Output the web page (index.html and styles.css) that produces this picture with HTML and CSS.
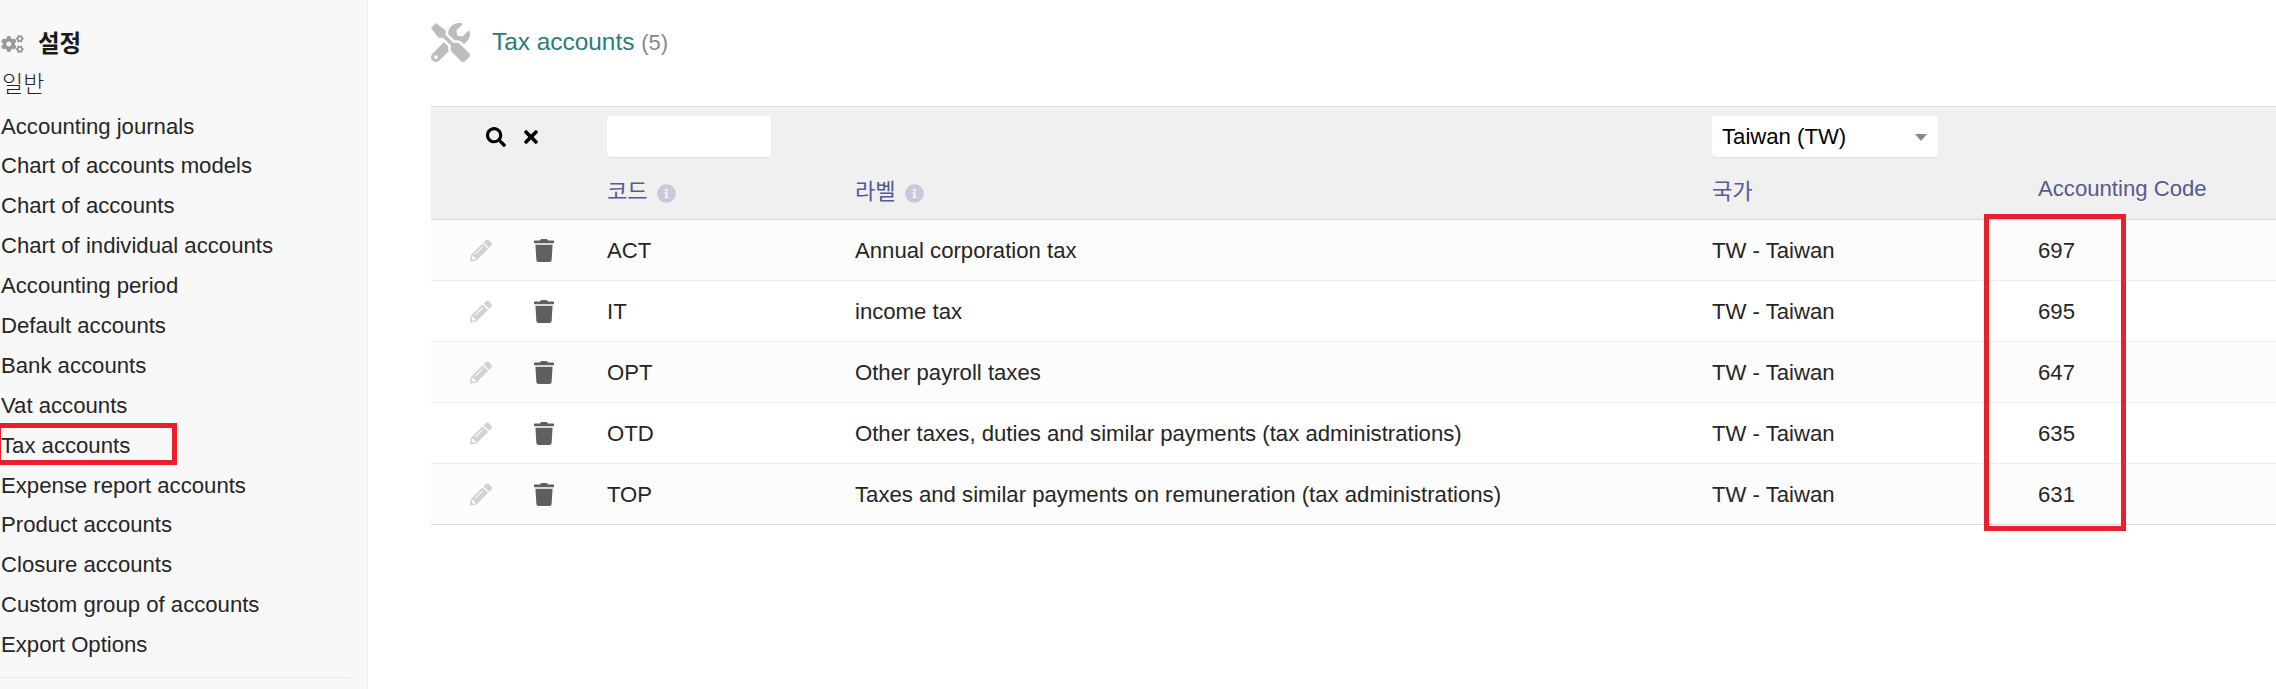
FILE: index.html
```html
<!DOCTYPE html>
<html lang="ko">
<head>
<meta charset="utf-8">
<title>Tax accounts</title>
<link rel="stylesheet" href="styles.css">
</head>
<body>
<div class="page">
  <aside class="sidebar">
    <div class="side-title">
      <svg class="cogs" viewBox="0 0 640 512"><path d="M512.1 191l-8.2 14.3c-3 5.3-9.4 7.5-15.1 5.4-11.8-4.4-22.6-10.7-32.1-18.6-4.6-3.8-5.8-10.5-2.8-15.7l8.2-14.3c-6.9-8-12.3-17.3-15.9-27.4h-16.5c-6 0-11.2-4.3-12.2-10.3-2-12-2.1-24.6 0-37.1 1-6 6.2-10.4 12.2-10.4h16.5c3.6-10.1 9-19.4 15.9-27.4l-8.2-14.3c-3-5.2-1.9-11.9 2.8-15.7 9.5-7.9 20.4-14.2 32.1-18.6 5.7-2.1 12.1.1 15.1 5.4l8.2 14.3c10.5-1.9 21.2-1.9 31.7 0L552 6.3c3-5.3 9.4-7.5 15.1-5.4 11.8 4.4 22.6 10.7 32.1 18.6 4.6 3.8 5.8 10.5 2.8 15.7l-8.2 14.3c6.9 8 12.3 17.3 15.9 27.4h16.5c6 0 11.2 4.3 12.2 10.3 2 12 2.1 24.6 0 37.1-1 6-6.2 10.4-12.2 10.4h-16.5c-3.6 10.1-9 19.4-15.9 27.4l8.2 14.3c3 5.2 1.9 11.9-2.8 15.7-9.5 7.9-20.4 14.2-32.1 18.6-5.7 2.1-12.1-.1-15.1-5.4l-8.2-14.3c-10.4 1.9-21.2 1.9-31.7 0zm-10.5-58.8c38.5 29.6 82.4-14.3 52.8-52.8-38.5-29.7-82.4 14.3-52.8 52.8zM386.3 286.1l33.7 16.8c10.1 5.8 14.5 18.1 10.5 29.1-8.9 24.2-26.4 46.4-42.6 65.8-7.4 8.9-20.2 11.1-30.3 5.3l-29.1-16.8c-16 13.7-34.6 24.6-54.9 31.7v33.6c0 11.6-8.3 21.6-19.7 23.6-24.6 4.2-50.4 4.4-75.9 0-11.5-2-20-11.9-20-23.6V418c-20.3-7.2-38.9-18-54.9-31.7L74 403c-10 5.8-22.9 3.6-30.3-5.3-16.2-19.4-33.3-41.6-42.2-65.7-4-10.9.4-23.2 10.5-29.1l33.3-16.8c-3.9-20.9-3.9-42.4 0-63.4L12 205.8c-10.1-5.8-14.6-18.1-10.5-29 8.9-24.2 26-46.4 42.2-65.8 7.4-8.9 20.2-11.1 30.3-5.3l29.1 16.8c16-13.7 34.6-24.6 54.9-31.7V57.1c0-11.5 8.2-21.5 19.6-23.5 24.6-4.2 50.5-4.4 76-.1 11.5 2 20 11.9 20 23.6v33.6c20.3 7.2 38.9 18 54.9 31.7l29.1-16.8c10-5.8 22.9-3.6 30.3 5.3 16.2 19.4 33.2 41.6 42.1 65.8 4 10.9.1 23.2-10 29.1l-33.7 16.8c3.9 21 3.9 42.5 0 63.5zm-117.6 21.1c59.2-77-28.7-164.9-105.7-105.7-59.2 77 28.7 164.9 105.7 105.7zm243.4 182.7l-8.2 14.3c-3 5.3-9.4 7.5-15.1 5.4-11.8-4.4-22.6-10.7-32.1-18.6-4.6-3.8-5.8-10.5-2.8-15.7l8.2-14.3c-6.9-8-12.3-17.3-15.9-27.4h-16.5c-6 0-11.2-4.3-12.2-10.3-2-12-2.1-24.6 0-37.1 1-6 6.2-10.4 12.2-10.4h16.5c3.6-10.1 9-19.4 15.9-27.4l-8.2-14.3c-3-5.2-1.9-11.9 2.8-15.7 9.5-7.9 20.4-14.2 32.1-18.6 5.7-2.1 12.1.1 15.1 5.4l8.2 14.3c10.5-1.9 21.2-1.9 31.7 0l8.2-14.3c3-5.3 9.4-7.5 15.1-5.4 11.8 4.4 22.6 10.7 32.1 18.6 4.6 3.8 5.8 10.5 2.8 15.7l-8.2 14.3c6.9 8 12.3 17.3 15.9 27.4h16.5c6 0 11.2 4.3 12.2 10.3 2 12 2.1 24.6 0 37.1-1 6-6.2 10.4-12.2 10.4h-16.5c-3.6 10.1-9 19.4-15.9 27.4l8.2 14.3c3 5.2 1.9 11.9-2.8 15.7-9.5 7.9-20.4 14.2-32.1 18.6-5.7 2.1-12.1-.1-15.1-5.4l-8.2-14.3c-10.4 1.9-21.2 1.9-31.7 0zM501.6 431c38.5 29.6 82.4-14.3 52.8-52.8-38.5-29.6-82.4 14.3-52.8 52.8z"/></svg>
      <span>설정</span>
    </div>
    <nav class="side-nav">
      <a class="side-link side-link-ko">일반</a>
      <a class="side-link">Accounting journals</a>
      <a class="side-link">Chart of accounts models</a>
      <a class="side-link">Chart of accounts</a>
      <a class="side-link">Chart of individual accounts</a>
      <a class="side-link">Accounting period</a>
      <a class="side-link">Default accounts</a>
      <a class="side-link">Bank accounts</a>
      <a class="side-link">Vat accounts</a>
      <a class="side-link">Tax accounts</a>
      <a class="side-link">Expense report accounts</a>
      <a class="side-link">Product accounts</a>
      <a class="side-link">Closure accounts</a>
      <a class="side-link">Custom group of accounts</a>
      <a class="side-link">Export Options</a>
    </nav>
    <hr class="side-rule">
  </aside>

  <main class="main">
    <header class="title-bar">
      <svg class="tools" viewBox="0 0 512 512"><path d="M501.1 395.7L384 278.6c-23.1-23.1-57.6-27.6-85.4-13.9L192 158.1V96L64 0 0 64l96 128h62.1l106.6 106.6c-13.6 27.8-9.2 62.3 13.9 85.4l117.1 117.1c14.6 14.6 38.2 14.6 52.7 0l52.7-52.7c14.5-14.6 14.5-38.2 0-52.7zM331.7 225c28.3 0 54.9 11 74.9 31l19.4 19.4c15.8-6.9 30.8-16.5 43.8-29.5 37.1-37.1 49.7-89.3 37.9-136.7-2.2-9-13.5-12.1-20.1-5.5l-74.4 74.4-67.9-11.3L334 98.9l74.4-74.4c6.6-6.6 3.4-17.9-5.7-20.2-47.4-11.7-99.6.9-136.6 37.9-28.5 28.5-41.9 66.1-41.2 103.6l82.1 82.1c8.1-1.9 16.5-2.9 24.7-2.9zm-103.9 82l-56.7-56.7L18.7 402.8c-25 25-25 65.5 0 90.5s65.5 25 90.5 0l123.6-123.6c-7.6-19.9-9.9-41.6-5-62.7zM64 472c-13.2 0-24-10.8-24-24 0-13.3 10.7-24 24-24s24 10.7 24 24c0 13.2-10.7 24-24 24z"/></svg>
      <h1 class="title">Tax accounts <span class="count">(5)</span></h1>
    </header>

    <table class="grid">
      <colgroup>
        <col class="col-actions"><col class="col-code"><col class="col-label"><col class="col-country"><col>
      </colgroup>
      <thead>
        <tr class="filter-row">
          <th>
            <div class="filter-actions">
              <svg class="ic-search" viewBox="0 0 512 512"><path d="M505 442.7L405.3 343c-4.5-4.5-10.6-7-17-7H372c27.6-35.3 44-79.7 44-128C416 93.1 322.9 0 208 0S0 93.1 0 208s93.1 208 208 208c48.3 0 92.7-16.4 128-44v16.3c0 6.4 2.5 12.5 7 17l99.7 99.7c9.4 9.4 24.6 9.4 33.9 0l28.3-28.3c9.4-9.4 9.4-24.6.1-34zM208 336c-70.7 0-128-57.2-128-128 0-70.7 57.2-128 128-128 70.7 0 128 57.2 128 128 0 70.7-57.2 128-128 128z"/></svg>
              <svg class="ic-times" viewBox="0 0 352 512"><path d="M242.72 256l100.07-100.07c12.28-12.28 12.28-32.19 0-44.48l-22.24-22.24c-12.28-12.28-32.19-12.28-44.48 0L176 189.28 75.93 89.21c-12.28-12.28-32.19-12.28-44.48 0L9.21 111.45c-12.28 12.28-12.28 32.19 0 44.48L109.28 256 9.21 356.07c-12.28 12.28-12.28 32.19 0 44.48l22.24 22.24c12.28 12.28 32.2 12.28 44.48 0L176 322.72l100.07 100.07c12.28 12.28 32.2 12.28 44.48 0l22.24-22.24c12.28-12.28 12.28-32.19 0-44.48L242.72 256z"/></svg>
            </div>
          </th>
          <th><div class="field field-input"></div></th>
          <th></th>
          <th><div class="field field-select"><span>Taiwan (TW)</span><i class="caret"></i></div></th>
          <th></th>
        </tr>
        <tr class="head-row">
          <th></th>
          <th>코드 <svg class="ic-info" viewBox="0 0 512 512"><path d="M256 8C119 8 8 119.1 8 256s111 248 248 248 248-111 248-248S393 8 256 8zm0 110c23.2 0 42 18.8 42 42s-18.8 42-42 42-42-18.8-42-42 18.8-42 42-42zm56 254c0 6.6-5.4 12-12 12h-88c-6.6 0-12-5.4-12-12v-24c0-6.6 5.4-12 12-12h12v-64h-12c-6.6 0-12-5.4-12-12v-24c0-6.6 5.4-12 12-12h64c6.6 0 12 5.4 12 12v100h12c6.6 0 12 5.4 12 12v24z"/></svg></th>
          <th>라벨 <svg class="ic-info" viewBox="0 0 512 512"><path d="M256 8C119 8 8 119.1 8 256s111 248 248 248 248-111 248-248S393 8 256 8zm0 110c23.2 0 42 18.8 42 42s-18.8 42-42 42-42-18.8-42-42 18.8-42 42-42zm56 254c0 6.6-5.4 12-12 12h-88c-6.6 0-12-5.4-12-12v-24c0-6.6 5.4-12 12-12h12v-64h-12c-6.6 0-12-5.4-12-12v-24c0-6.6 5.4-12 12-12h64c6.6 0 12 5.4 12 12v100h12c6.6 0 12 5.4 12 12v24z"/></svg></th>
          <th>국가</th>
          <th>Accounting Code</th>
        </tr>
      </thead>
      <tbody>
        <tr>
          <td><div class="row-actions"><svg class="ic-pencil" viewBox="0 0 512 512"><use href="#pencil"/></svg><svg class="ic-trash" viewBox="0 0 448 512"><use href="#trash"/></svg></div></td>
          <td>ACT</td><td>Annual corporation tax</td><td>TW - Taiwan</td><td>697</td>
        </tr>
        <tr>
          <td><div class="row-actions"><svg class="ic-pencil" viewBox="0 0 512 512"><use href="#pencil"/></svg><svg class="ic-trash" viewBox="0 0 448 512"><use href="#trash"/></svg></div></td>
          <td>IT</td><td>income tax</td><td>TW - Taiwan</td><td>695</td>
        </tr>
        <tr>
          <td><div class="row-actions"><svg class="ic-pencil" viewBox="0 0 512 512"><use href="#pencil"/></svg><svg class="ic-trash" viewBox="0 0 448 512"><use href="#trash"/></svg></div></td>
          <td>OPT</td><td>Other payroll taxes</td><td>TW - Taiwan</td><td>647</td>
        </tr>
        <tr>
          <td><div class="row-actions"><svg class="ic-pencil" viewBox="0 0 512 512"><use href="#pencil"/></svg><svg class="ic-trash" viewBox="0 0 448 512"><use href="#trash"/></svg></div></td>
          <td>OTD</td><td>Other taxes, duties and similar payments (tax administrations)</td><td>TW - Taiwan</td><td>635</td>
        </tr>
        <tr>
          <td><div class="row-actions"><svg class="ic-pencil" viewBox="0 0 512 512"><use href="#pencil"/></svg><svg class="ic-trash" viewBox="0 0 448 512"><use href="#trash"/></svg></div></td>
          <td>TOP</td><td>Taxes and similar payments on remuneration (tax administrations)</td><td>TW - Taiwan</td><td>631</td>
        </tr>
      </tbody>
    </table>
  </main>

  <div class="mark mark-side"></div>
  <div class="mark mark-col"></div>
</div>

<svg class="defs" width="0" height="0" aria-hidden="true">
  <defs>
    <path id="pencil" d="M497.9 142.1l-46.1 46.1c-4.7 4.7-12.3 4.7-17 0l-111-111c-4.7-4.7-4.7-12.3 0-17l46.1-46.1c18.7-18.7 49.1-18.7 67.9 0l60.1 60.1c18.8 18.7 18.8 49.1 0 67.9zM284.2 99.8L21.6 362.4.4 483.9c-2.9 16.4 11.4 30.6 27.8 27.8l121.5-21.3 262.6-262.6c4.7-4.7 4.7-12.3 0-17l-111-111c-4.8-4.7-12.4-4.7-17.1 0zM124.1 339.9c-5.5-5.5-5.5-14.3 0-19.8l154-154c5.5-5.5 14.3-5.5 19.8 0s5.5 14.3 0 19.8l-154 154c-5.5 5.5-14.3 5.5-19.8 0zM88 424h48v36.3l-64.5 11.3-31.1-31.1L51.7 376H88v48z"/>
    <path id="trash" d="M432 32H312l-9.4-18.7A24 24 0 0 0 281.1 0H166.8a23.72 23.72 0 0 0-21.4 13.3L136 32H16A16 16 0 0 0 0 48v32a16 16 0 0 0 16 16h416a16 16 0 0 0 16-16V48a16 16 0 0 0-16-16zM53.2 467a48 48 0 0 0 47.9 45h245.8a48 48 0 0 0 47.9-45L416 128H32z"/>
  </defs>
</svg>
</body>
</html>
```

FILE: styles.css
```css
* { box-sizing: border-box; }

html, body {
  margin: 0;
  height: 689px;
  overflow: hidden;
  background: #fff;
}

body {
  font-family: "Liberation Sans", "Noto Sans CJK KR", sans-serif;
  font-size: 22.15px;
  color: #262626;
}

.page {
  position: relative;
  display: flex;
  width: 2276px;
  height: 689px;
  overflow: hidden;
}

.defs { position: absolute; }

/* Sidebar */
.sidebar {
  flex: 0 0 368px;
  height: 689px;
  background: #f8f8f8;
  border-right: 1px solid #eeeeee;
  padding-top: 27px;
}

.side-title {
  display: flex;
  align-items: center;
  height: 30px;
  padding-left: 1px;
  font-weight: 700;
  font-size: 23.5px;
  color: #1a1a1a;
}

.cogs {
  width: 23px;
  height: 18px;
  margin-right: 14px;
  margin-top: 3px;
  fill: #999999;
}

.side-nav {
  display: flex;
  flex-direction: column;
  margin-top: 7px;
}

.side-link {
  display: block;
  height: 39.9px;
  line-height: 39.9px;
  padding-left: 1px;
  color: #262626;
  white-space: nowrap;
}

.side-link-ko {
  height: 42.5px;
  line-height: 40px;
  padding-left: 2px;
  font-size: 23px;
  font-weight: 300;
}

.side-rule {
  width: 350px;
  margin: 12px 0 0;
  border: 0;
  border-top: 1px solid #e6e6e6;
}

/* Main */
.main {
  flex: 1 1 auto;
  min-width: 0;
  padding-left: 63px;
}

.title-bar {
  display: flex;
  align-items: center;
  height: 106px;
  padding-bottom: 22px;
}

.tools {
  width: 39px;
  height: 39px;
  margin-right: 22px;
  fill: #bdbdbd;
}

.title {
  margin: 0;
  font-size: 24.4px;
  font-weight: 400;
  color: #2a7a80;
}

.count {
  font-size: 22px;
  color: #888888;
}

/* Table */
.grid {
  width: 1845px;
  table-layout: fixed;
  border-collapse: collapse;
}

.col-actions { width: 168px; }
.col-code { width: 248px; }
.col-label { width: 857px; }
.col-country { width: 326px; }

.grid th,
.grid td {
  padding: 0 0 0 8px;
  text-align: left;
  font-weight: 400;
  white-space: nowrap;
}

.grid td + td { padding-top: 2px; }

.grid thead { background: #f0f0f0; }

.filter-row { border-top: 1px solid #dddddd; }

.filter-row th {
  height: 65px;
  padding-top: 9px;
  vertical-align: top;
}

.head-row { border-bottom: 1px solid #d8d8d8; }

.head-row th {
  height: 48px;
  padding-bottom: 12px;
  color: #555a90;
}

.grid tbody tr {
  height: 61px;
  border-bottom: 1px solid #eeeeee;
}

.grid tbody tr:nth-child(odd) { background: #fcfcfc; }

.grid tbody tr:last-child { border-bottom: 1px solid #d8d8d8; }

/* Filters */
.filter-actions {
  display: flex;
  align-items: center;
  gap: 18px;
  height: 41px;
  padding-left: 47px;
}

.ic-search { width: 20px; height: 20px; fill: #000000; }
.ic-times { width: 14px; height: 20px; fill: #000000; }

.field {
  height: 41px;
  background: #ffffff;
  border-radius: 4px;
  box-shadow: 0 1px 1px #e0e0e0;
}

.field-input { width: 164px; }

.field-select {
  display: flex;
  align-items: center;
  justify-content: space-between;
  width: 226px;
  padding: 0 11px 0 10px;
  color: #000000;
}

.caret {
  width: 0;
  height: 0;
  border-left: 6px solid transparent;
  border-right: 6px solid transparent;
  border-top: 7px solid #888888;
  margin-top: 2px;
}

.ic-info {
  width: 19px;
  height: 19px;
  margin-left: 3px;
  vertical-align: -4px;
  fill: #c8c9db;
}

/* Row actions */
.row-actions {
  display: flex;
  align-items: center;
  gap: 42px;
  padding-left: 31px;
}

.ic-pencil { width: 22px; height: 23px; fill: #d2d2d2; }
.ic-trash { width: 20px; height: 23px; fill: #5f5f5f; }

/* Annotation marks */
.mark {
  position: absolute;
  border: 5px solid #e8202c;
  pointer-events: none;
}

.mark-side { left: -4px; top: 423px; width: 181px; height: 42px; }
.mark-col { left: 1984px; top: 214px; width: 142px; height: 317px; }
```
